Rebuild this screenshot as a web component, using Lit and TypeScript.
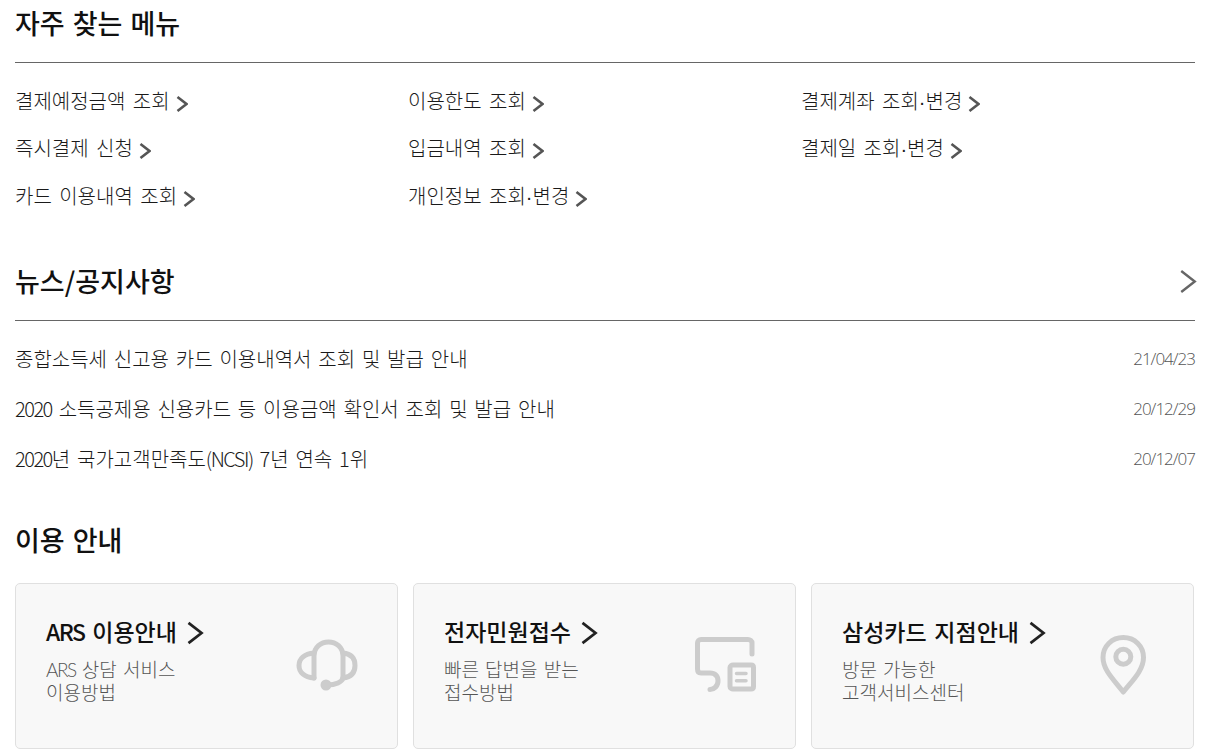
import { LitElement, html, css, svg } from 'lit';
import { customElement } from 'lit/decorators.js';

const menu = [
  '결제예정금액 조회',
  '이용한도 조회',
  '결제계좌 조회·변경',
  '즉시결제 신청',
  '입금내역 조회',
  '결제일 조회·변경',
  '카드 이용내역 조회',
  '개인정보 조회·변경',
];

const news = [
  { title: '종합소득세 신고용 카드 이용내역서 조회 및 발급 안내', date: '21/04/23' },
  { title: '2020 소득공제용 신용카드 등 이용금액 확인서 조회 및 발급 안내', date: '20/12/29' },
  { title: '2020년 국가고객만족도(NCSI) 7년 연속 1위', date: '20/12/07' },
];

const headsetIcon = svg`
  <path d="M24 48V26C24 17 31 12 38.5 12S53 17 53 26V48" />
  <path d="M24 23C14 24 9 29 9 35.5S14 47 24 48" />
  <path d="M53 23C62 24 65 29 65 35.5S62 47 53 48" />
  <path d="M53 48C52 52 46 55 37 55" />
  <circle cx="36" cy="55" r="5.5" fill="#ccc" stroke="none" />
`;

const formIcon = svg`
  <path d="M64 24V13C64 11 62 9.5 60 9.5H13C11 9.5 9.5 11 9.5 13V39C9.5 42 11 43 13 43H22C27 43 30 46 30 51C30 56 26 59.5 22 59.5" />
  <path d="M45 35H63C64.5 35 65.5 36 65.5 37.5V56.5C65.5 58 64.5 59 63 59H45C43.500 59 42 58 42 56.5V37.5C42 36 43.500 35 45 35Z" />
  <path class="thin" d="M48.500 43.500H58M48.500 50.700H58" />
`;

const pinIcon = svg`
  <path d="M33.300 62C24 50 13 40 13 27.500C13 16 22 7.500 33.300 7.500S53.500 16 53.500 27.500C53.500 40 43 50 33.300 62Z" />
  <circle cx="33.300" cy="26.700" r="7.500" />
`;

const cards = [
  { title: 'ARS 이용안내', lines: ['ARS 상담 서비스', '이용방법'], icon: headsetIcon, w: 75, cls: 'headset' },
  { title: '전자민원접수', lines: ['빠른 답변을 받는', '접수방법'], icon: formIcon, w: 75, cls: 'form' },
  { title: '삼성카드 지점안내', lines: ['방문 가능한', '고객서비스센터'], icon: pinIcon, w: 65, cls: 'pin' },
];

const chevron = (cls: string) => html`
  <svg class=${cls} viewBox="0 0 12 18" fill="none" aria-hidden="true">
    <path d="M1.500 2L10.500 9L1.500 16" />
  </svg>
`;

// latin runs and the middle dot are narrower in the reference than in the CJK font
const fmt = (text: string) =>
  text.split(/(ARS|2020|\(NCSI\)|·)/).map((part) => {
    if (part === '·') return html`<span class="dot">·</span>`;
    if (part === 'ARS' || part === '2020' || part === '(NCSI)') {
      return html`<span class="latin">${part}</span>`;
    }
    return part;
  });

@customElement('app-root')
export class AppRoot extends LitElement {
  static styles = css`
    :host {
      display: block;
      width: 1208px;
      height: 753px;
      overflow: hidden;
      background: #fff;
      font-family: 'Noto Sans CJK KR', 'Noto Sans', sans-serif;
      color: #111;
    }

    .page {
      padding: 0 13px 0 15px;
    }

    h2 {
      margin: 0;
      font-size: 27px;
      line-height: 36px;
      font-weight: 500;
      word-spacing: 2px;
      color: #111;
    }

    .head {
      display: flex;
      justify-content: space-between;
      align-items: center;
      height: 63px;
      padding-bottom: 16px;
      box-sizing: border-box;
      border-bottom: 1px solid #666;
    }

    .menu {
      display: grid;
      grid-template-columns: repeat(3, 393px);
      grid-auto-rows: 47.5px;
      padding-top: 13px;
      height: 182px;
    }

    .menu a {
      display: flex;
      align-items: center;
      gap: 6px;
      height: 48px;
      font-size: 20px;
      font-weight: 300;
      word-spacing: 3px;
      color: #1a1a1a;
    }

    .dot {
      font-family: 'Liberation Sans', sans-serif;
    }

    .latin {
      letter-spacing: -1.5px;
    }

    .link-arrow {
      width: 12px;
      height: 18px;
      margin-top: 7px;
      stroke: #555;
      stroke-width: 2.6;
    }

    .news-arrow {
      width: 18px;
      height: 27px;
      margin-right: -2px;
      stroke: #666;
      stroke-width: 1.6;
    }

    .news {
      list-style: none;
      margin: 0;
      padding: 12px 0 0;
      height: 189px;
    }

    .news li {
      display: flex;
      justify-content: space-between;
      align-items: center;
      height: 50px;
      font-size: 20px;
      font-weight: 300;
      word-spacing: 2.4px;
      color: #1a1a1a;
    }

    .news .date {
      font-family: 'Open Sans', sans-serif;
      font-size: 17px;
      letter-spacing: -1px;
      color: #555;
    }

    .cards {
      display: grid;
      grid-template-columns: repeat(3, 383px);
      gap: 15px;
      margin-top: 25px;
    }

    .card {
      position: relative;
      height: 166px;
      box-sizing: border-box;
      padding: 29px 30px 0;
      border: 1px solid #e0e0e0;
      border-radius: 5px;
      background: #f8f8f8;
    }

    .card-title {
      display: flex;
      align-items: center;
      gap: 9px;
      font-size: 23px;
      line-height: 36px;
      font-weight: 500;
      word-spacing: 2.5px;
      color: #111;
    }

    .title-arrow {
      width: 18px;
      height: 26px;
      margin-top: 3px;
      stroke: #222;
      stroke-width: 1.9;
    }

    .card p {
      margin: 9px 0 0;
      font-family: Lato, 'Noto Sans CJK KR', sans-serif;
      font-size: 19px;
      line-height: 23px;
      font-weight: 300;
      word-spacing: 1px;
      color: #555;
    }

    .card .icon {
      position: absolute;
      top: 46px;
      left: 274px;
      height: 70px;
      fill: none;
      stroke: #ccc;
      stroke-width: 5;
      stroke-linecap: round;
      stroke-linejoin: round;
    }

    .card .icon.pin {
      left: 278px;
    }

    .icon .thin {
      stroke-width: 3.5;
    }
  `;

  render() {
    return html`
      <div class="page">
        <section>
          <div class="head"><h2>자주 찾는 메뉴</h2></div>
          <div class="menu">
            ${menu.map((m) => html`<a><span>${fmt(m)}</span>${chevron('link-arrow')}</a>`)}
          </div>
        </section>
        <section>
          <div class="head"><h2>뉴스/공지사항</h2>${chevron('news-arrow')}</div>
          <ul class="news">
            ${news.map(
              (n) => html`<li><span>${fmt(n.title)}</span><span class="date">${n.date}</span></li>`
            )}
          </ul>
        </section>
        <section>
          <h2>이용 안내</h2>
          <div class="cards">
            ${cards.map(
              (c) => html`
                <div class="card">
                  <div class="card-title"><span>${fmt(c.title)}</span>${chevron('title-arrow')}</div>
                  <p>${fmt(c.lines[0])}<br />${c.lines[1]}</p>
                  <svg class="icon ${c.cls}" width=${c.w} height="70" viewBox="0 0 ${c.w} 70">${c.icon}</svg>
                </div>
              `
            )}
          </div>
        </section>
      </div>
    `;
  }
}
